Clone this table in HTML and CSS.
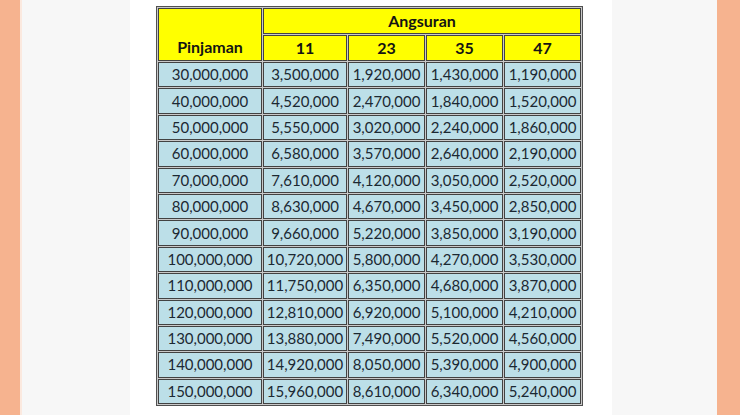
FILE: index.html
```html
<!DOCTYPE html>
<html>
<head>
<meta charset="utf-8">
<link rel="stylesheet" href="styles.css">
</head>
<body>
<div class="page">
  <div class="edge edge-left"></div>
  <div class="side side-left"></div>
  <main class="content">
    <div class="sheet">
      <div class="cell head pinjaman">Pinjaman</div>
      <div class="cell head angsuran">Angsuran</div>
      <div class="cell head">11</div>
      <div class="cell head">23</div>
      <div class="cell head">35</div>
      <div class="cell head">47</div>

      <div class="cell">30,000,000</div><div class="cell">3,500,000</div><div class="cell">1,920,000</div><div class="cell">1,430,000</div><div class="cell">1,190,000</div>
      <div class="cell">40,000,000</div><div class="cell">4,520,000</div><div class="cell">2,470,000</div><div class="cell">1,840,000</div><div class="cell">1,520,000</div>
      <div class="cell">50,000,000</div><div class="cell">5,550,000</div><div class="cell">3,020,000</div><div class="cell">2,240,000</div><div class="cell">1,860,000</div>
      <div class="cell">60,000,000</div><div class="cell">6,580,000</div><div class="cell">3,570,000</div><div class="cell">2,640,000</div><div class="cell">2,190,000</div>
      <div class="cell">70,000,000</div><div class="cell">7,610,000</div><div class="cell">4,120,000</div><div class="cell">3,050,000</div><div class="cell">2,520,000</div>
      <div class="cell">80,000,000</div><div class="cell">8,630,000</div><div class="cell">4,670,000</div><div class="cell">3,450,000</div><div class="cell">2,850,000</div>
      <div class="cell">90,000,000</div><div class="cell">9,660,000</div><div class="cell">5,220,000</div><div class="cell">3,850,000</div><div class="cell">3,190,000</div>
      <div class="cell">100,000,000</div><div class="cell">10,720,000</div><div class="cell">5,800,000</div><div class="cell">4,270,000</div><div class="cell">3,530,000</div>
      <div class="cell">110,000,000</div><div class="cell">11,750,000</div><div class="cell">6,350,000</div><div class="cell">4,680,000</div><div class="cell">3,870,000</div>
      <div class="cell">120,000,000</div><div class="cell">12,810,000</div><div class="cell">6,920,000</div><div class="cell">5,100,000</div><div class="cell">4,210,000</div>
      <div class="cell">130,000,000</div><div class="cell">13,880,000</div><div class="cell">7,490,000</div><div class="cell">5,520,000</div><div class="cell">4,560,000</div>
      <div class="cell">140,000,000</div><div class="cell">14,920,000</div><div class="cell">8,050,000</div><div class="cell">5,390,000</div><div class="cell">4,900,000</div>
      <div class="cell">150,000,000</div><div class="cell">15,960,000</div><div class="cell">8,610,000</div><div class="cell">6,340,000</div><div class="cell">5,240,000</div>
    </div>
  </main>
  <div class="side side-right"></div>
  <div class="edge edge-right"></div>
</div>
</body>
</html>
```

FILE: styles.css
```css
html, body {
  margin: 0;
  padding: 0;
}
body {
  width: 740px;
  height: 415px;
  overflow: hidden;
  font-family: "Lato", "Liberation Sans", sans-serif;
}
.page {
  display: flex;
  height: 415px;
}
.edge {
  background: #f6b38f;
}
.edge-left {
  width: 20px;
}
.edge-right {
  width: 23px;
}
.side {
  background: #f7f7f7;
}
.side-left {
  width: 108px;
  border-left: 2px solid #fbe9df;
}
.side-right {
  width: 105px;
}
.content {
  width: 482px;
  background: #ffffff;
  padding: 6px 0 0 26px;
  box-sizing: border-box;
}
.sheet {
  display: grid;
  grid-template-columns: 104px 84px 77px 77px 77px;
  grid-template-rows: 26px 26px repeat(13, 25.4px);
  gap: 1px;
  padding: 1px;
  border: 1px solid #505050;
  background: #c9c9c9;
  width: max-content;
}
.cell {
  border: 1px solid #424242;
  background: #bcdfe8;
  color: #1b2832;
  font-size: 15px;
  display: flex;
  align-items: center;
  justify-content: center;
  white-space: nowrap;
  line-height: 1;
}
.head {
  background: #ffff00;
  color: #141414;
  font-weight: bold;
  font-size: 16px;
}
.pinjaman {
  grid-row: 1 / span 2;
  align-items: flex-end;
  padding-bottom: 5px;
}
.angsuran {
  grid-column: 2 / span 4;
}
```
